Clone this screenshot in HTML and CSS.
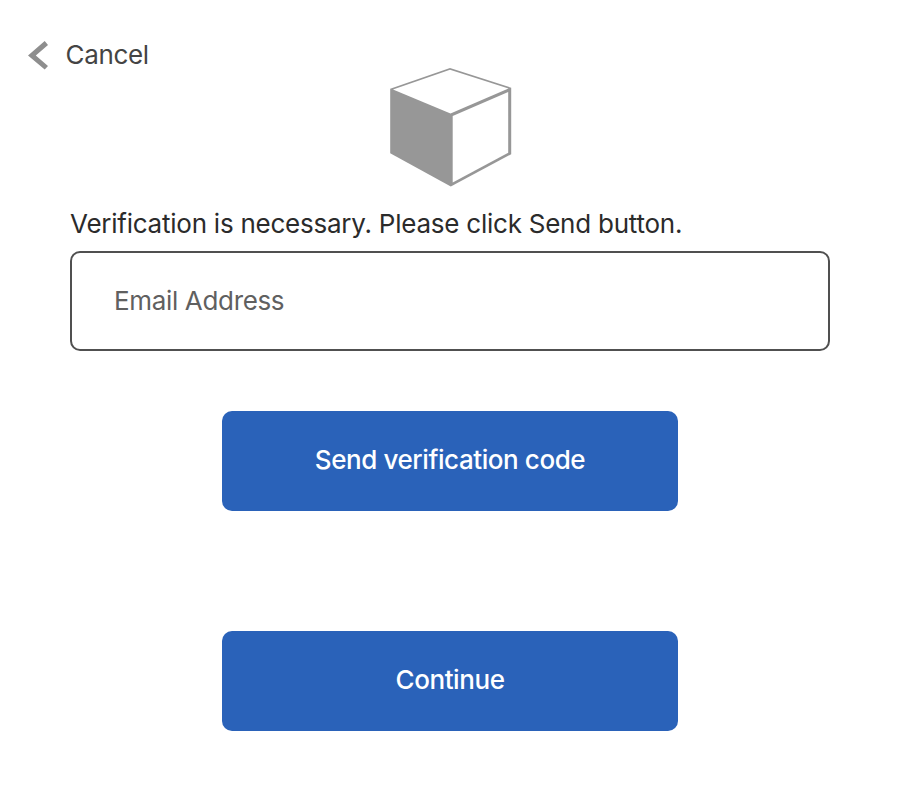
FILE: index.html
```html
<!DOCTYPE html>
<html lang="en">
<head>
<meta charset="utf-8">
<title>Email verification</title>
<link rel="stylesheet" href="styles.css">
</head>
<body>
<header class="top">
  <button class="cancel" type="button">
    <svg class="chevron" width="22" height="30" viewBox="0 0 22 30"><path d="M17.700 1 21 5 8.800 15.500 21 26 17.700 29.600 1 15.500Z" fill="#8e8e8e"/></svg>
    <span>Cancel</span>
  </button>
</header>
<main class="panel">
  <svg class="logo" width="122" height="120" viewBox="0 0 122 120">
    <path d="M.2 21.700 60 .9 121.200 20.700V87.200L60.800 119.500 .2 86.200Z" fill="#979797"/>
    <path d="M3 22.400 60 2.800 118.500 21.600 60.500 46.500Z" fill="#fff"/>
    <path d="M62.700 49 118.200 25V85.800L62.700 115.500Z" fill="#fff"/>
  </svg>
  <p class="intro">Verification is necessary. Please click Send button.</p>
  <input class="email" type="email" placeholder="Email Address" aria-label="Email Address">
  <button class="action send" type="button"><span class="send-label">Send verification code</span></button>
  <button class="action continue" type="button"><span class="continue-label">Continue</span></button>
</main>
</body>
</html>
```

FILE: styles.css
```css
* {
  box-sizing: border-box;
}

body {
  margin: 0;
  background: #fff;
  color: #2b2b2b;
  font: 26px/32px Inter, sans-serif;
  letter-spacing: -0.24px;
}

button,
input {
  font: inherit;
  letter-spacing: -0.34px;
}

.top {
  height: 67px;
  padding: 39px 0 0 27px;
}

.cancel {
  display: flex;
  align-items: center;
  gap: 16.5px;
  height: 32px;
  padding: 0;
  border: 0;
  background: none;
  color: #444;
}

.panel {
  display: flex;
  flex-direction: column;
  align-items: center;
  width: 760px;
  margin-left: 70px;
}

.logo {
  margin-left: 2px;
}

.intro {
  align-self: flex-start;
  margin: 21px 0 11px;
  white-space: nowrap;
}

.email {
  width: 760px;
  height: 100px;
  padding: 0 42px 2px;
  border: 2px solid #505050;
  border-radius: 10px;
  background: #fff;
}

.email::placeholder {
  color: #606060;
  opacity: 1;
}

.action {
  width: 456px;
  height: 100px;
  padding: 0 0 2px;
  border: 0;
  border-radius: 10px;
  background: #2a62b9;
  color: #fff;
  font-weight: 500;
  letter-spacing: -0.42px;
}

.send {
  margin-top: 60px;
}

.continue {
  margin-top: 120px;
}
```
